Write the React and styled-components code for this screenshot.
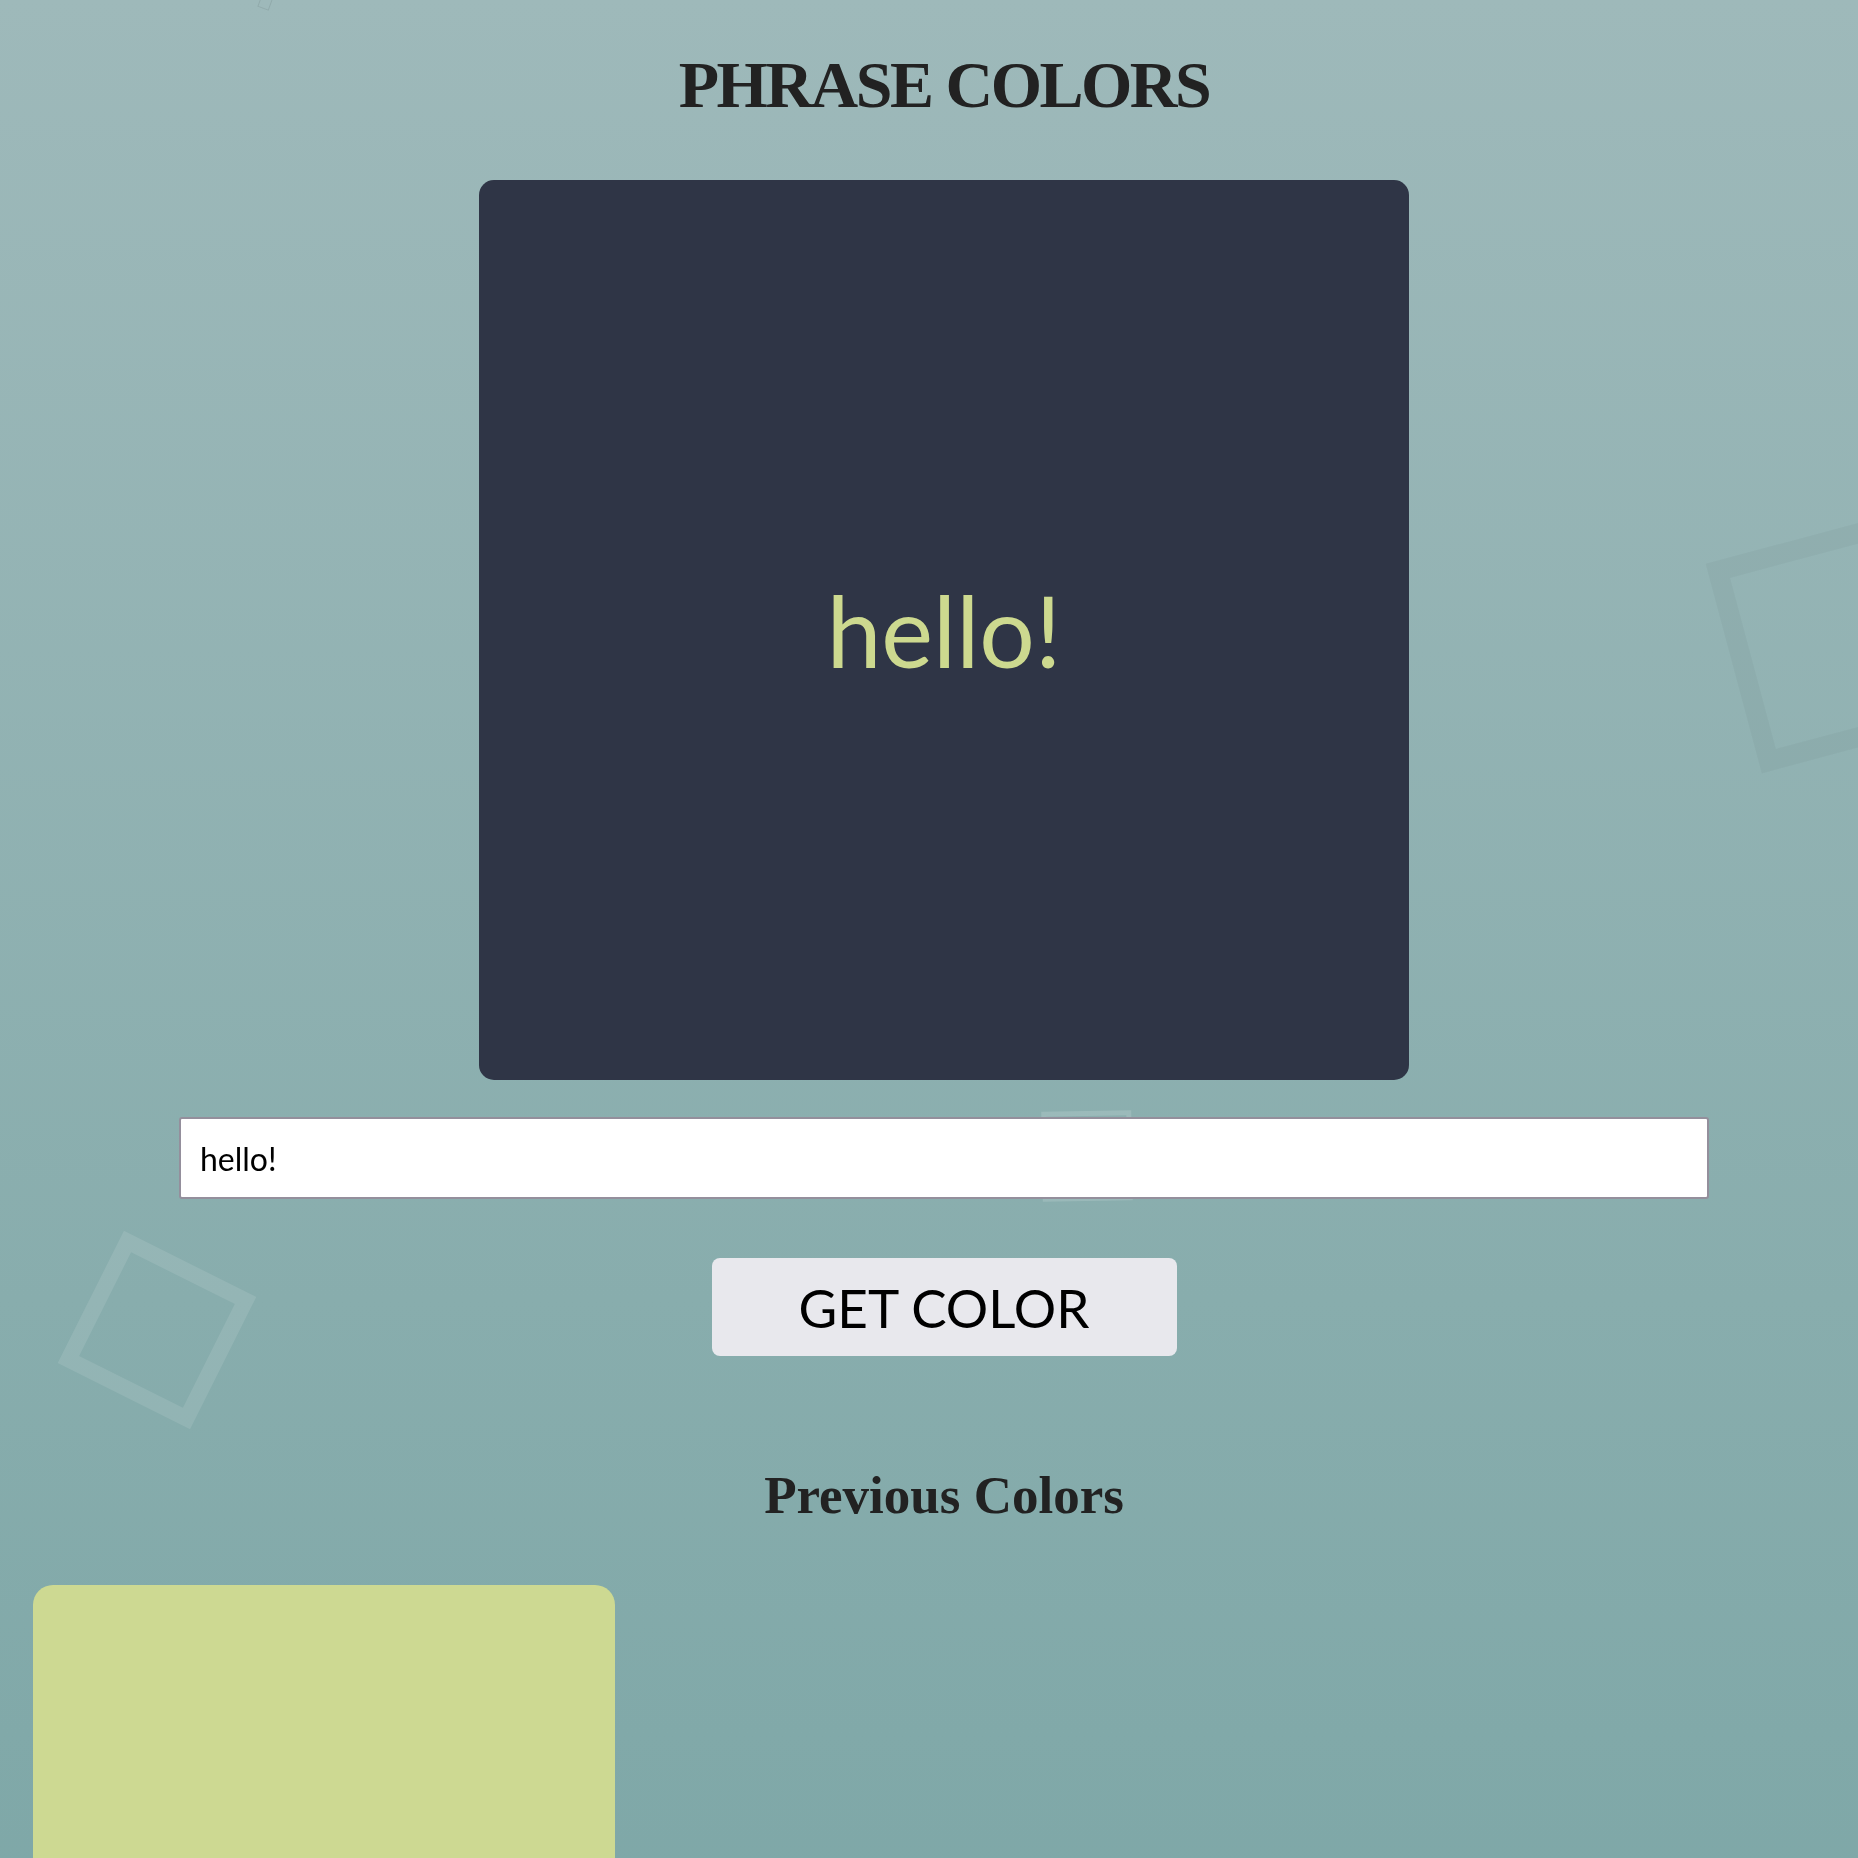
import { useState } from "react";
import styled, { createGlobalStyle } from "styled-components";

const GlobalStyle = createGlobalStyle`
  html, body {
    margin: 0;
    padding: 0;
    overflow: hidden;
  }

  body {
    min-height: 100vh;
    background: linear-gradient(to bottom, #9eb9ba 0%, #88adad 60%, #7aa5a5 100%);
    font-family: Lato, "Open Sans", sans-serif;
  }
`;

const squares = [
  { left: 259, top: -3, size: 12, border: 1, rotate: 20, color: "rgba(0, 0, 0, 0.08)" },
  { left: 83, top: 1256, size: 148, border: 16, rotate: 26.6, color: "rgba(255, 255, 255, 0.1)" },
  { left: 1730, top: 532, size: 217, border: 20, rotate: -15, color: "rgba(0, 0, 0, 0.03)" },
  { left: 1042, top: 1111, size: 90, border: 5, rotate: -1, color: "rgba(255, 255, 255, 0.14)" },
];

export default function App() {
  const [phrase, setPhrase] = useState("hello!");
  const [shown, setShown] = useState("hello!");
  const [history, setHistory] = useState(["#cdd992"]);

  return (
    <>
      <GlobalStyle />
      <Backdrop>
        {squares.map((sq, i) => (
          <Square key={i} {...sq} />
        ))}
      </Backdrop>

      <Page>
        <Title>PHRASE COLORS</Title>

        <Preview>
          <PreviewText>{shown}</PreviewText>
        </Preview>

        <PhraseInput
          type="text"
          value={phrase}
          onChange={(e) => setPhrase(e.target.value)}
        />

        <GetButton
          onClick={() => {
            setShown(phrase);
            setHistory([...history]);
          }}
        >
          GET COLOR
        </GetButton>

        <SubTitle>Previous Colors</SubTitle>

        <Swatches>
          {history.map((c, i) => (
            <Swatch key={i} $color={c} />
          ))}
        </Swatches>
      </Page>
    </>
  );
}

const Backdrop = styled.div`
  position: fixed;
  inset: 0;
  overflow: hidden;
  z-index: 0;
`;

const Square = styled.span.attrs((p) => ({
  style: {
    left: p.left + "px",
    top: p.top + "px",
    width: p.size + "px",
    height: p.size + "px",
    borderWidth: p.border + "px",
    borderColor: p.color,
    transform: `rotate(${p.rotate}deg)`,
  },
}))`
  position: absolute;
  box-sizing: border-box;
  border-style: solid;
`;

const Page = styled.main`
  position: relative;
  z-index: 1;
  box-sizing: border-box;
  width: 100%;
  padding-left: 30px;
  display: flex;
  flex-direction: column;
  align-items: center;
`;

const Title = styled.h1`
  margin: 43px 0 54px;
  font-family: "Liberation Serif", serif;
  font-weight: 700;
  font-size: 66px;
  line-height: 83px;
  letter-spacing: -2.5px;
  color: #222222;
`;

const Preview = styled.div`
  width: 930px;
  height: 900px;
  border-radius: 15px;
  background: #2f3546;
  display: flex;
  align-items: center;
  justify-content: center;
`;

const PreviewText = styled.span`
  font-family: Lato, sans-serif;
  font-size: 98px;
  color: #cdd98f;
`;

const PhraseInput = styled.input`
  box-sizing: border-box;
  width: 1530px;
  height: 82px;
  margin-top: 37px;
  padding: 0 19px;
  border: 2px solid #948f9c;
  border-radius: 3px;
  background: #ffffff;
  font-family: Lato, sans-serif;
  font-size: 32px;
  color: #000000;
  outline: none;
`;

const GetButton = styled.button`
  width: 465px;
  height: 98px;
  margin-top: 59px;
  border: none;
  border-radius: 8px;
  background: #e8e8ed;
  font-family: Lato, sans-serif;
  font-size: 53px;
  color: #000000;
  cursor: pointer;
`;

const SubTitle = styled.h2`
  margin: 109px 0 59px;
  font-family: "Liberation Serif", serif;
  font-weight: 700;
  font-size: 53px;
  line-height: 61px;
  color: #222222;
`;

const Swatches = styled.div`
  align-self: stretch;
  padding-left: 3px;
  display: grid;
  grid-template-columns: repeat(3, 582px);
  gap: 30px;
`;

const Swatch = styled.div`
  height: 582px;
  border-radius: 20px;
  background: ${(p) => p.$color};
`;
